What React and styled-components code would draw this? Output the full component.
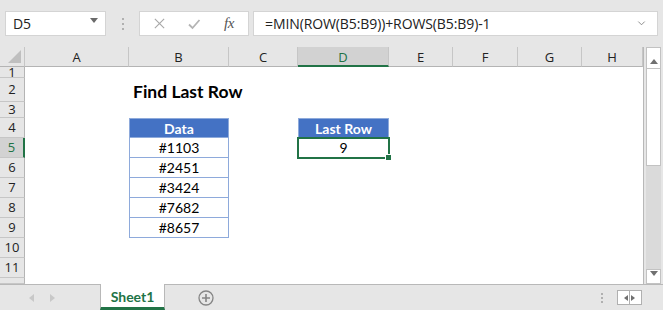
import React from "react";
import styled, { createGlobalStyle } from "styled-components";

const GlobalStyle = createGlobalStyle`
  html, body { margin: 0; padding: 0; background: #fff; }
  body { font-family: "Open Sans", "Liberation Sans", sans-serif; }
`;

const GREEN = "#217346";
const HEAD_LINE = "#c6c6c6";
const TABLE_LINE = "#8eaadb";

/**
 * Column and row sizes, in pixels
 */
const columns = [
  { name: "A", width: 104 },
  { name: "B", width: 100 },
  { name: "C", width: 69 },
  { name: "D", width: 91 },
  { name: "E", width: 64 },
  { name: "F", width: 65 },
  { name: "G", width: 64 },
  { name: "H", width: 61 }
];
const rows = [11, 24, 16, 20, 20, 20, 20, 20, 20, 20, 20, 6];

const data = ["#1103", "#2451", "#3424", "#7682", "#8657"];

const Window = styled.div`
  width: 663px;
  height: 310px;
  display: flex;
  flex-direction: column;
  overflow: hidden;
  background: #e6e6e6;
`;

/* ---------- formula bar ---------- */

const Toolbar = styled.div`
  height: 47px;
  display: flex;
  align-items: flex-start;
  padding: 11px 5px 0 5px;
  box-sizing: border-box;
`;

const Field = styled.div`
  height: 25px;
  box-sizing: border-box;
  background: #fff;
  border: 1px solid #d4d4d4;
  display: flex;
  align-items: center;
  width: ${p => (p.$width ? `${p.$width}px` : "auto")};
  flex: ${p => (p.$grow ? 1 : "none")};
  margin-left: ${p => p.$gap || 0}px;
  padding: 0 ${p => p.$pad || 0}px;
  font-size: 14px;
  color: #222;
`;

const FieldText = styled.span`
  flex: 1;
  white-space: nowrap;
  letter-spacing: -0.1px;
`;

const Grip = styled.div`
  width: 3px;
  height: 25px;
  margin-left: 15px;
  display: flex;
  flex-direction: column;
  justify-content: center;
  gap: 3px;
  align-items: center;

  & span {
    width: 2px;
    height: 2px;
    background: #b0b0b0;
  }
`;

const FxSlot = styled.div`
  width: ${p => p.$width}px;
  display: flex;
  justify-content: center;
  align-items: center;
  color: #a8a8a8;
`;

const FxLabel = styled.span`
  font-family: "Liberation Serif", "DejaVu Serif", serif;
  font-style: italic;
  font-size: 15px;
  color: #555;
  letter-spacing: -0.5px;
`;

/* ---------- sheet ---------- */

const Main = styled.div`
  height: 237px;
  display: flex;
`;

const Sheet = styled.div`
  width: 644px;
  display: grid;
  grid-template-columns: 25px ${columns.map(c => `${c.width}px`).join(" ")};
  grid-template-rows: 20px ${rows.map(r => `${r}px`).join(" ")};
  background: #fff;
  border-right: 1px solid #b8b8b8;
  box-sizing: border-box;
  position: relative;
  overflow: hidden;
`;

const Corner = styled.div`
  background: #e6e6e6;
  border-right: 1px solid ${HEAD_LINE};
  border-bottom: 1px solid #b4b4b4;
  position: relative;

  &::after {
    content: "";
    position: absolute;
    right: 3px;
    bottom: 3px;
    width: 0;
    height: 0;
    border-left: 13px solid transparent;
    border-bottom: 13px solid #bfbfbf;
  }
`;

const ColHead = styled.div`
  background: ${p => (p.$active ? "#d2d2d2" : "#e6e6e6")};
  border-right: 1px solid ${HEAD_LINE};
  border-bottom: ${p => (p.$active ? `2px solid ${GREEN}` : "1px solid #b4b4b4")};
  display: flex;
  align-items: center;
  justify-content: center;
  font-size: 13px;
  color: ${p => (p.$active ? GREEN : "#222")};
  padding-top: ${p => (p.$active ? 1 : 0)}px;
`;

const RowHead = styled.div`
  background: ${p => (p.$active ? "#d2d2d2" : "#e6e6e6")};
  border-right: ${p => (p.$active ? `2px solid ${GREEN}` : `1px solid #b4b4b4`)};
  border-bottom: 1px solid ${HEAD_LINE};
  display: flex;
  align-items: center;
  justify-content: center;
  font-size: 13px;
  line-height: 1;
  overflow: hidden;
  color: ${p => (p.$active ? GREEN : "#222")};
`;

const Cell = styled.div`
  display: flex;
  align-items: center;
  justify-content: ${p => (p.$left ? "flex-start" : "center")};
  font-family: Lato, "Open Sans", sans-serif;
  font-size: 14px;
  color: #000;
  white-space: nowrap;
  padding-left: ${p => (p.$left ? 4 : 0)}px;
  box-sizing: border-box;
`;

const Title = styled(Cell)`
  font-size: 17.5px;
  font-weight: 700;
  padding-top: 2px;
`;

const TableCell = styled(Cell)`
  background: ${p => (p.$head ? "#4472c4" : "#fff")};
  color: ${p => (p.$head ? "#fff" : "#000")};
  font-weight: ${p => (p.$head ? 700 : 400)};
  border-left: 1px solid ${TABLE_LINE};
  border-right: 1px solid ${TABLE_LINE};
  border-bottom: 1px solid ${TABLE_LINE};
  border-top: ${p => (p.$head ? `1px solid ${TABLE_LINE}` : "none")};
`;

const Selection = styled.div`
  position: absolute;
  left: 297px;
  top: 90px;
  width: 93px;
  height: 22px;
  box-sizing: border-box;
  border: 2px solid ${GREEN};
  pointer-events: none;

  &::after {
    content: "";
    position: absolute;
    right: -4px;
    bottom: -4px;
    width: 5px;
    height: 5px;
    background: ${GREEN};
    border: 1px solid #fff;
  }
`;

/* ---------- scroll bars ---------- */

const VScroll = styled.div`
  width: 19px;
  display: flex;
  flex-direction: column;
  padding: 0 2px;
  box-sizing: border-box;
  background: #e6e6e6;
`;

const ScrollButton = styled.div`
  height: ${p => p.$h}px;
  background: #fff;
  border: 1px solid #c2c2c2;
  box-sizing: border-box;
  display: flex;
  align-items: center;
  justify-content: center;
`;

const Thumb = styled.div`
  height: 97px;
  background: #fff;
  border: 1px solid #c2c2c2;
  border-top: none;
  box-sizing: border-box;
`;

const Track = styled.div`
  flex: 1;
  background: #dadada;
`;

const Triangle = styled.span`
  width: 0;
  height: 0;
  border: ${p => p.$size || 4}px solid transparent;
  ${p => `border-${p.$dir}-color: ${p.$color || "#707070"};`}
  ${p => `border-${p.$dir}-width: ${(p.$size || 4) + 1}px;`}
  margin-${p => p.$dir}: ${p => -(p.$size || 4) + 1}px;
`;

/* ---------- bottom tabs ---------- */

const TabBar = styled.div`
  height: 26px;
  display: flex;
  align-items: stretch;
  border-top: 1px solid #b8b8b8;
  box-sizing: border-box;
`;

const NavArrows = styled.div`
  width: 100px;
  display: flex;
  align-items: center;
  padding-left: 25px;
  gap: 22px;
  box-sizing: border-box;
`;

const SheetTab = styled.div`
  width: 65px;
  margin-top: -1px;
  background: #fff;
  border-left: 1px solid #b8b8b8;
  border-right: 1px solid #b8b8b8;
  border-bottom: 3px solid ${GREEN};
  box-sizing: border-box;
  display: flex;
  align-items: center;
  justify-content: center;
  font-family: Lato, "Open Sans", sans-serif;
  font-weight: 700;
  font-size: 14px;
  color: ${GREEN};
  padding-top: 1px;
`;

const AddSheet = styled.div`
  margin-left: 33px;
  display: flex;
  align-items: center;
`;

const Spacer = styled.div`
  flex: 1;
`;

const Dots = styled(Grip)`
  height: auto;
  margin: 0 15px 0 0;
  gap: 2px;
`;

const HScrollButtons = styled.div`
  display: flex;
  align-items: center;
  margin-right: 21px;
`;

const HButton = styled.div`
  width: 13px;
  height: 15px;
  border: 1px solid #b0b0b0;
  margin-left: -1px;
  background: #fff;
  box-sizing: border-box;
  display: flex;
  align-items: center;
  justify-content: center;
`;

const Icon = ({ children, size = 14, stroke = "#a8a8a8", width = 1.3 }) => (
  <svg
    width={size}
    height={size}
    viewBox="0 0 14 14"
    fill="none"
    stroke={stroke}
    strokeWidth={width}
  >
    {children}
  </svg>
);

const App = () => {
  const tableRows = { 4: "Data" };
  data.forEach((d, i) => (tableRows[5 + i] = d));

  const renderCell = (rowNo, colName) => {
    const key = `${colName}${rowNo}`;
    if (colName === "B" && rowNo === 2) {
      return (
        <Title key={key} $left>
          Find Last Row
        </Title>
      );
    }
    if (colName === "B" && tableRows[rowNo]) {
      return (
        <TableCell key={key} $head={rowNo === 4}>
          {tableRows[rowNo]}
        </TableCell>
      );
    }
    if (colName === "D" && rowNo === 4) {
      return (
        <TableCell key={key} $head>
          Last Row
        </TableCell>
      );
    }
    if (colName === "D" && rowNo === 5) {
      return <TableCell key={key}>9</TableCell>;
    }
    return <Cell key={key} />;
  };

  return (
    <Window>
      <GlobalStyle />
      <Toolbar>
        <Field $width={101} $pad={7}>
          <FieldText>D5</FieldText>
          <Triangle $dir="top" $size={4} $color="#6a6a6a" />
        </Field>
        <Grip>
          <span />
          <span />
          <span />
        </Grip>
        <Field $width={110} $gap={15}>
          <FxSlot $width={38}>
            <Icon size={13} width={1.2}>
              <path d="M2 2 L12 12 M12 2 L2 12" />
            </Icon>
          </FxSlot>
          <FxSlot $width={32}>
            <Icon size={14} width={1.8} stroke="#b4b4b4">
              <path d="M2 7.5 L5.5 11 L12.5 3" />
            </Icon>
          </FxSlot>
          <FxSlot $width={38}>
            <FxLabel>fx</FxLabel>
          </FxSlot>
        </Field>
        <Field $grow $gap={4} $pad={11}>
          <FieldText>=MIN(ROW(B5:B9))+ROWS(B5:B9)-1</FieldText>
          <Icon size={9} stroke="#777" width={1.3}>
            <path d="M2 4 L7 9 L12 4" />
          </Icon>
        </Field>
      </Toolbar>

      <Main>
        <Sheet>
          <Corner />
          {columns.map(c => (
            <ColHead key={c.name} $active={c.name === "D"}>
              {c.name}
            </ColHead>
          ))}
          {rows.map((h, i) => {
            const rowNo = i + 1;
            return (
              <React.Fragment key={rowNo}>
                <RowHead $active={rowNo === 5}>{h > 8 ? rowNo : ""}</RowHead>
                {columns.map(c => renderCell(rowNo, c.name))}
              </React.Fragment>
            );
          })}
          <Selection />
        </Sheet>
        <VScroll>
          <ScrollButton $h={22}>
            <Triangle $dir="bottom" $size={4} $color="#707070" />
          </ScrollButton>
          <Thumb />
          <Track />
          <ScrollButton $h={15}>
            <Triangle $dir="top" $size={4} $color="#707070" />
          </ScrollButton>
        </VScroll>
      </Main>

      <TabBar>
        <NavArrows>
          <Triangle $dir="right" $size={4} $color="#c8c8c8" />
          <Triangle $dir="left" $size={4} $color="#c8c8c8" />
        </NavArrows>
        <SheetTab>Sheet1</SheetTab>
        <AddSheet>
          <svg width="16" height="16" viewBox="0 0 16 16" fill="none" stroke="#858585">
            <circle cx="8" cy="8" r="7" strokeWidth="1.3" />
            <path d="M8 4 V12 M4 8 H12" strokeWidth="1.6" />
          </svg>
        </AddSheet>
        <Spacer />
        <Dots>
          <span />
          <span />
          <span />
        </Dots>
        <HScrollButtons>
          <HButton>
            <Triangle $dir="right" $size={3} $color="#707070" />
          </HButton>
          <HButton>
            <Triangle $dir="left" $size={3} $color="#707070" />
          </HButton>
        </HScrollButtons>
      </TabBar>
    </Window>
  );
};

export default App;
